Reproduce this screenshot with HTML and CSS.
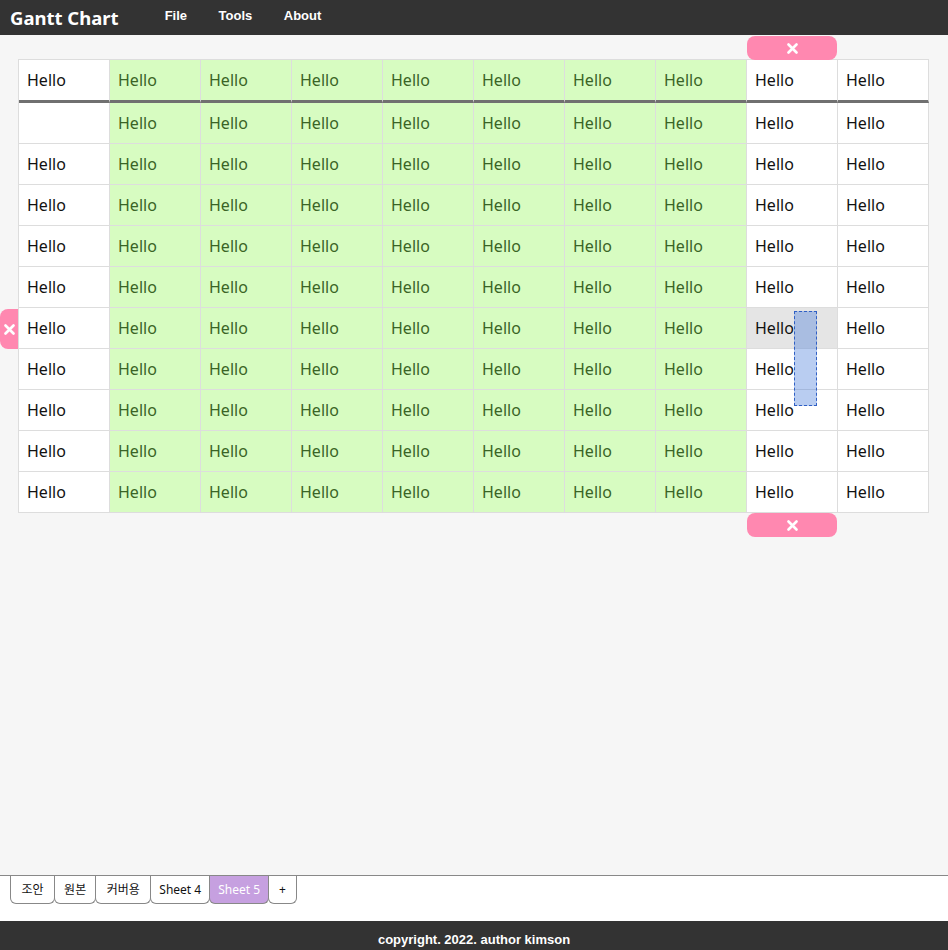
FILE: index.html
```html
<!DOCTYPE html>
<html lang="ko">
<head>
<meta charset="utf-8">
<title>Gantt Chart</title>
<link rel="stylesheet" href="styles.css">
</head>
<body>
<header class="topbar">
  <div class="brand">Gantt Chart</div>
  <nav class="menu">
    <span class="menu-item">File</span>
    <span class="menu-item">Tools</span>
    <span class="menu-item">About</span>
  </nav>
</header>
<main class="main">
  <div class="sheet">
    <button class="del del-top" aria-label="delete column"><svg width="11" height="11" viewBox="0 0 11 11"><path d="M1.5 1.5 9.5 9.5M9.5 1.5 1.5 9.5" stroke="#fff" stroke-width="2.6" stroke-linecap="round"/></svg></button>
    <button class="del del-left" aria-label="delete row"><svg width="11" height="11" viewBox="0 0 11 11"><path d="M1.5 1.5 9.5 9.5M9.5 1.5 1.5 9.5" stroke="#fff" stroke-width="2.6" stroke-linecap="round"/></svg></button>
    <button class="del del-bottom" aria-label="delete column"><svg width="11" height="11" viewBox="0 0 11 11"><path d="M1.5 1.5 9.5 9.5M9.5 1.5 1.5 9.5" stroke="#fff" stroke-width="2.6" stroke-linecap="round"/></svg></button>
    <div class="selection"></div>
    <div class="grid">
      <div class="cell hd">Hello</div><div class="cell hd g">Hello</div><div class="cell hd g">Hello</div><div class="cell hd g">Hello</div><div class="cell hd g">Hello</div><div class="cell hd g">Hello</div><div class="cell hd g">Hello</div><div class="cell hd g">Hello</div><div class="cell hd">Hello</div><div class="cell hd">Hello</div>
      <div class="cell"></div><div class="cell g">Hello</div><div class="cell g">Hello</div><div class="cell g">Hello</div><div class="cell g">Hello</div><div class="cell g">Hello</div><div class="cell g">Hello</div><div class="cell g">Hello</div><div class="cell">Hello</div><div class="cell">Hello</div>
      <div class="cell">Hello</div><div class="cell g">Hello</div><div class="cell g">Hello</div><div class="cell g">Hello</div><div class="cell g">Hello</div><div class="cell g">Hello</div><div class="cell g">Hello</div><div class="cell g">Hello</div><div class="cell">Hello</div><div class="cell">Hello</div>
      <div class="cell">Hello</div><div class="cell g">Hello</div><div class="cell g">Hello</div><div class="cell g">Hello</div><div class="cell g">Hello</div><div class="cell g">Hello</div><div class="cell g">Hello</div><div class="cell g">Hello</div><div class="cell">Hello</div><div class="cell">Hello</div>
      <div class="cell">Hello</div><div class="cell g">Hello</div><div class="cell g">Hello</div><div class="cell g">Hello</div><div class="cell g">Hello</div><div class="cell g">Hello</div><div class="cell g">Hello</div><div class="cell g">Hello</div><div class="cell">Hello</div><div class="cell">Hello</div>
      <div class="cell">Hello</div><div class="cell g">Hello</div><div class="cell g">Hello</div><div class="cell g">Hello</div><div class="cell g">Hello</div><div class="cell g">Hello</div><div class="cell g">Hello</div><div class="cell g">Hello</div><div class="cell">Hello</div><div class="cell">Hello</div>
      <div class="cell">Hello</div><div class="cell g">Hello</div><div class="cell g">Hello</div><div class="cell g">Hello</div><div class="cell g">Hello</div><div class="cell g">Hello</div><div class="cell g">Hello</div><div class="cell g">Hello</div><div class="cell sel">Hello</div><div class="cell">Hello</div>
      <div class="cell">Hello</div><div class="cell g">Hello</div><div class="cell g">Hello</div><div class="cell g">Hello</div><div class="cell g">Hello</div><div class="cell g">Hello</div><div class="cell g">Hello</div><div class="cell g">Hello</div><div class="cell">Hello</div><div class="cell">Hello</div>
      <div class="cell">Hello</div><div class="cell g">Hello</div><div class="cell g">Hello</div><div class="cell g">Hello</div><div class="cell g">Hello</div><div class="cell g">Hello</div><div class="cell g">Hello</div><div class="cell g">Hello</div><div class="cell">Hello</div><div class="cell">Hello</div>
      <div class="cell">Hello</div><div class="cell g">Hello</div><div class="cell g">Hello</div><div class="cell g">Hello</div><div class="cell g">Hello</div><div class="cell g">Hello</div><div class="cell g">Hello</div><div class="cell g">Hello</div><div class="cell">Hello</div><div class="cell">Hello</div>
      <div class="cell">Hello</div><div class="cell g">Hello</div><div class="cell g">Hello</div><div class="cell g">Hello</div><div class="cell g">Hello</div><div class="cell g">Hello</div><div class="cell g">Hello</div><div class="cell g">Hello</div><div class="cell">Hello</div><div class="cell">Hello</div>
    </div>
  </div>
</main>
<div class="tabbar">
  <span class="tab ko">조안</span><span class="tab ko narrow">원본</span><span class="tab ko">커버용</span><span class="tab en">Sheet 4</span><span class="tab en active">Sheet 5</span><span class="tab add">+</span>
</div>
<footer class="footer">copyright. 2022. author kimson</footer>
</body>
</html>
```

FILE: styles.css
```css
* { box-sizing: border-box; }
html, body { margin: 0; padding: 0; }
body {
  height: 950px;
  display: flex;
  flex-direction: column;
  background: #f6f6f6;
  font-family: "Noto Sans", "Noto Sans CJK KR", sans-serif;
  overflow: hidden;
}
.topbar {
  height: 35px;
  flex: none;
  background: #333333;
  color: #fff;
  display: flex;
  align-items: center;
  padding-left: 10px;
}
.brand {
  font-family: "Noto Sans", sans-serif;
  font-weight: 700;
  font-size: 18.5px;
  line-height: 35px;
}
.menu {
  display: flex;
  gap: 31.5px;
  margin-left: 46px;
  margin-top: -5px;
}
.menu-item {
  font-family: "Liberation Sans", Arial, sans-serif;
  font-weight: 700;
  font-size: 13px;
}
.main {
  flex: 1;
  padding: 24px 0 0 18px;
}
.sheet {
  position: relative;
  width: 911px;
}
.grid {
  display: grid;
  grid-template-columns: repeat(10, 91px);
  border-left: 1px solid #dddddd;
  border-top: 1px solid #dddddd;
}
.cell {
  height: 41px;
  border-right: 1px solid #dddddd;
  border-bottom: 1px solid #dddddd;
  background: #ffffff;
  color: #111111;
  font-size: 16px;
  line-height: 40px;
  padding-left: 8px;
  white-space: nowrap;
}
.cell.hd {
  height: 43px;
  border-bottom: 3px solid #707070;
}
.cell.g {
  background: #d7fcc1;
  color: #3a6426;
}
.cell.sel {
  background: #e5e5e5;
}
.del {
  position: absolute;
  border: none;
  padding: 0;
  background: #ff88b0;
  display: flex;
  align-items: center;
  justify-content: center;
  cursor: pointer;
  z-index: 2;
}
.del-top {
  left: 729px;
  top: -23px;
  width: 90px;
  height: 24px;
  border-radius: 8px;
}
.del-bottom {
  left: 729px;
  top: 454px;
  width: 90px;
  height: 24px;
  border-radius: 8px;
}
.del-left {
  left: -18px;
  top: 250px;
  width: 18px;
  height: 40px;
  border-radius: 8px 0 0 8px;
}
.selection {
  position: absolute;
  left: 776px;
  top: 252px;
  width: 23px;
  height: 95px;
  border: 1px dashed #2f5fc4;
  background: rgba(80, 130, 220, 0.4);
  z-index: 3;
}
.tabbar {
  height: 46px;
  flex: none;
  background: #ffffff;
  border-top: 1px solid #888888;
  padding-left: 10px;
  display: flex;
  align-items: flex-start;
}
.tab {
  height: 28px;
  border: 1px solid #888888;
  border-top: none;
  border-radius: 0 0 6px 6px;
  padding: 0 9px;
  font-size: 12px;
  line-height: 27px;
  color: #111;
  background: #fff;
  margin-right: -1px;
  font-family: "Noto Sans", "Noto Sans CJK KR", sans-serif;
}
.tab.ko {
  padding: 0 10.5px;
}
.tab.ko.narrow {
  padding: 0 9px;
}
.tab.en {
  padding: 0 8px;
}
.tab.active {
  background: #c6a0e0;
  color: #ffffff;
}
.tab.add {
  padding: 0 10px;
}
.footer {
  height: 29px;
  flex: none;
  background: #333333;
  color: #ffffff;
  text-align: center;
  font-family: "Liberation Sans", Arial, sans-serif;
  font-weight: 700;
  font-size: 13px;
  line-height: 37px;
}
```
